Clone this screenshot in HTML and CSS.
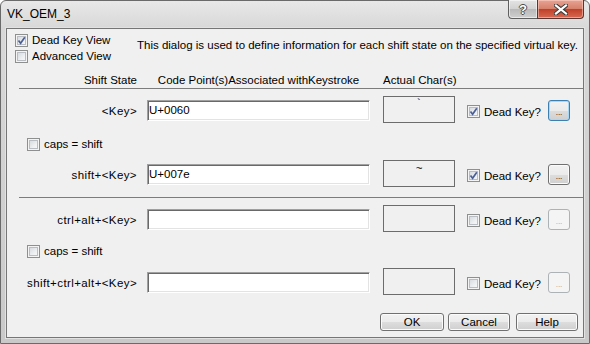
FILE: index.html
```html
<!DOCTYPE html>
<html>
<head>
<meta charset="utf-8">
<link rel="stylesheet" href="styles.css">
</head>
<body>
<div class="window">
  <div class="titlebar">
    <span class="title">VK_OEM_3</span>
    <div class="caption">
      <span class="cbtn qbtn">?</span>
      <span class="cbtn xbtn"><svg width="14" height="11" viewBox="0 0 14 11"><path d="M2 1.5 L12 9.5 M12 1.5 L2 9.5" stroke="#3a3a3a" stroke-width="4.2" stroke-linecap="square"/><path d="M2 1.5 L12 9.5 M12 1.5 L2 9.5" stroke="#fff" stroke-width="2.2" stroke-linecap="square"/></svg></span>
    </div>
  </div>
  <div class="client">
    <div class="top">
      <div class="views">
        <div class="chk"><span class="box checked"><svg width="11" height="11" viewBox="0 0 11 11"><path d="M2.5 5.5 L4.6 8.2 L8.8 2.2" fill="none" stroke="#4a5f97" stroke-width="1.7"/></svg></span>Dead Key View</div>
        <div class="chk"><span class="box"></span>Advanced View</div>
      </div>
      <p class="desc">This dialog is used to define information for each shift state on the specified virtual key.</p>
    </div>
    <div class="header">
      <span class="h-lbl">Shift State</span>
      <span class="h-code">Code Point(s)Associated withKeystroke</span>
      <span class="h-char">Actual Char(s)</span>
    </div>
    <div class="sep sep1"></div>

    <div class="row r1">
      <span class="lbl">&lt;Key&gt;</span>
      <div class="input">U+0060</div>
      <div class="char">`</div>
      <div class="dk"><span class="box checked"><svg width="11" height="11" viewBox="0 0 11 11"><path d="M2.5 5.5 L4.6 8.2 L8.8 2.2" fill="none" stroke="#4a5f97" stroke-width="1.7"/></svg></span>Dead Key?</div>
      <span class="ell focus">...</span>
    </div>
    <div class="caps c1"><span class="box"></span>caps = shift</div>
    <div class="row r2">
      <span class="lbl">shift+&lt;Key&gt;</span>
      <div class="input">U+007e</div>
      <div class="char tilde">~</div>
      <div class="dk"><span class="box checked"><svg width="11" height="11" viewBox="0 0 11 11"><path d="M2.5 5.5 L4.6 8.2 L8.8 2.2" fill="none" stroke="#4a5f97" stroke-width="1.7"/></svg></span>Dead Key?</div>
      <span class="ell">...</span>
    </div>
    <div class="sep sep2"></div>

    <div class="row r3">
      <span class="lbl">ctrl+alt+&lt;Key&gt;</span>
      <div class="input"></div>
      <div class="char"></div>
      <div class="dk"><span class="box"></span>Dead Key?</div>
      <span class="ell disabled">...</span>
    </div>
    <div class="caps c2"><span class="box"></span>caps = shift</div>
    <div class="row r4">
      <span class="lbl">shift+ctrl+alt+&lt;Key&gt;</span>
      <div class="input"></div>
      <div class="char"></div>
      <div class="dk"><span class="box"></span>Dead Key?</div>
      <span class="ell disabled">...</span>
    </div>

    <div class="buttons">
      <span class="btn ok">OK</span>
      <span class="btn cancel">Cancel</span>
      <span class="btn help">Help</span>
    </div>
  </div>
</div>
</body>
</html>
```

FILE: styles.css
```css
* { box-sizing: border-box; }
html, body { margin: 0; padding: 0; background: #ffffff; }
body {
  font-family: "Liberation Sans", Arial, sans-serif;
  font-size: 11.5px;
  color: #000;
}
.window {
  width: 590px;
  height: 344px;
  border: 1px solid #6a6a6a;
  border-radius: 6px 6px 0 0;
  background: linear-gradient(#e8e8e8 0px, #d8d8d8 27px, #c9c9c9 100%);
  padding: 0 5px 5px 5px;
  display: flex;
  flex-direction: column;
}
.titlebar {
  height: 27px;
  display: flex;
  align-items: flex-start;
}
.title {
  margin-left: 1px;
  line-height: 26px;
  font-size: 12px;
}
.caption {
  margin-left: auto;
  margin-top: -1px;
  display: flex;
}
.cbtn {
  height: 19px;
  display: flex;
  align-items: center;
  justify-content: center;
  border: 1px solid #5f5f5f;
  border-top: none;
}
.qbtn {
  width: 29px;
  border-right: none;
  border-radius: 0 0 0 4px;
  background: linear-gradient(#e4e4e4 0%, #d2d2d2 48%, #b9b9b9 52%, #cfcfcf 100%);
  color: #fff;
  font-weight: bold;
  font-size: 13px;
  text-shadow: 1px 0 0 #4a4a4a, -1px 0 0 #4a4a4a, 0 1px 0 #4a4a4a, 0 -1px 0 #4a4a4a;
  box-shadow: inset 0 0 0 1px rgba(255,255,255,0.55);
}
.xbtn {
  width: 47px;
  border-radius: 0 0 4px 0;
  border-color: #5a3430;
  background: linear-gradient(#e7a493 0%, #d6806c 48%, #c0402a 52%, #d66a52 100%);
  box-shadow: inset 0 0 0 1px rgba(255,220,210,0.5);
}
.client {
  flex: 1;
  border: 1px solid #767676;
  background: #f0f0f0;
  box-shadow: 0 0 0 1px #e2e2e2;
  display: flex;
  flex-direction: column;
}
.top {
  display: flex;
  padding: 3px 0 0 8px;
}
.views {
  width: 122px;
  display: flex;
  flex-direction: column;
}
.chk, .caps, .dk {
  display: flex;
  align-items: center;
  gap: 4px;
  height: 16px;
  white-space: nowrap;
}
.box {
  width: 13px;
  height: 13px;
  flex: none;
  border: 1px solid #8e8f8f;
  background: linear-gradient(135deg, #cfd3d8 0%, #eef0f2 60%, #fbfbfb 100%);
  box-shadow: inset 0 0 0 1px #f4f4f4, inset 0 0 0 2px #b9bdc3;
  display: flex;
  align-items: center;
  justify-content: center;
}
.box svg { display: block; }
.desc {
  margin: 5px 0 0 0;
  line-height: 16px;
  white-space: nowrap;
}
.header {
  display: flex;
  margin-top: 8px;
  height: 16px;
  line-height: 16px;
  padding-left: 12px;
  white-space: nowrap;
}
.h-lbl { width: 118px; text-align: right; }
.h-code { margin-left: 10px; width: 223px; text-align: center; }
.h-char { margin-left: 13px; width: 72px; text-align: center; }
.sep {
  margin-left: 12px;
  height: 1px;
  background: #7c7c7c;
}
.sep1 { margin-top: 0; }
.row {
  display: flex;
  align-items: center;
  height: 27px;
  padding-left: 12px;
  white-space: nowrap;
}
.r1 { margin-top: 7px; }
.r2 { margin-top: 8px; }
.sep2 { margin-top: 10px; }
.r3 { margin-top: 7px; }
.r4 { margin-top: 9px; }
.lbl {
  width: 118px;
  text-align: right;
  padding-top: 2px;
  letter-spacing: 0.4px;
}
.input {
  margin-left: 10px;
  width: 223px;
  height: 21px;
  background: #fff;
  border-top: 1px solid #a0a0a0;
  border-left: 1px solid #a0a0a0;
  border-right: 1px solid #ffffff;
  border-bottom: 1px solid #ffffff;
  box-shadow: inset 1px 1px 0 #696969, inset -1px -1px 0 #e3e3e3;
  padding-left: 1px;
  line-height: 19px;
  margin-top: 1px;
}
.char {
  margin-left: 13px;
  width: 72px;
  height: 27px;
  border: 1px solid #6c6c6c;
  text-align: center;
  line-height: 11px;
  padding-top: 1px;
}
.char.tilde { padding-top: 2px; }
.dk {
  margin-left: 12px;
  width: 81px;
  margin-top: 4px;
}
.ell, .btn {
  display: flex;
  align-items: center;
  justify-content: center;
  border: 1px solid #707070;
  border-radius: 3px;
  background: linear-gradient(#f2f2f2 0%, #ebebeb 50%, #dddddd 51%, #cfcfcf 100%);
  box-shadow: inset 0 0 0 1px #fbfbfb;
}
.ell {
  width: 22px;
  height: 21px;
  font-size: 8px;
  line-height: 8px;
  padding-top: 4px;
  margin-top: 2px;
}
.ell.focus {
  border-color: #3c7fb1;
  box-shadow: inset 0 0 0 1px #a7d9f5;
}
.ell.disabled {
  border-color: #adb2b5;
  background: #f4f4f4;
  box-shadow: none;
  color: #a0a0a0;
}
.caps {
  padding-left: 20px;
}
.c1 { margin-top: 13px; }
.c2 { margin-top: 11px; }
.buttons {
  margin-top: 18px;
  display: flex;
  justify-content: flex-end;
  padding-right: 5px;
}
.btn {
  height: 18px;
  line-height: 16px;
}
.ok { width: 64px; }
.cancel { width: 62px; margin-left: 4px; }
.help { width: 62px; margin-left: 6px; }
```
